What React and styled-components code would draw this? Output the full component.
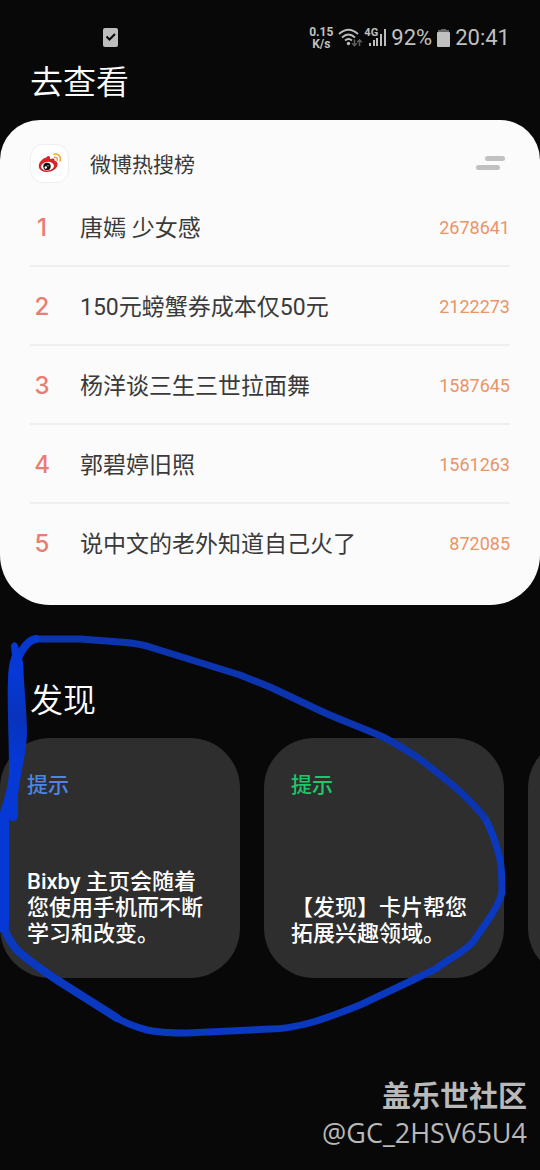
import React from 'react';
import styled, { createGlobalStyle } from 'styled-components';

const topics = [
    { rank: 1, title: '唐嫣 少女感', heat: 2678641 },
    { rank: 2, title: '150元螃蟹券成本仅50元', heat: 2122273 },
    { rank: 3, title: '杨洋谈三生三世拉面舞', heat: 1587645 },
    { rank: 4, title: '郭碧婷旧照', heat: 1561263 },
    { rank: 5, title: '说中文的老外知道自己火了', heat: 872085 },
];

const tips = [
    { id: 'home', color: '#4d85e6', lines: ['Bixby 主页会随着', '您使用手机而不断', '学习和改变。'] },
    { id: 'discover', color: '#1fc76a', lines: ['【发现】卡片帮您', '拓展兴趣领域。'] },
];

function StatusBar() {
    return (
        <Status>
            <svg width="15" height="19" viewBox="0 0 15 19">
                <rect width="15" height="19" rx="2" fill="#bdbdbd" />
                <path d="M3.500 8.500l3 3 5.500-5.500" fill="none" stroke="#080808" strokeWidth="2" />
            </svg>
            <StatusGroup>
                <Speed>
                    <span>0.15</span>
                    <span>K/s</span>
                </Speed>
                <WifiIcon />
                <SignalIcon />
                <StatusText>92%</StatusText>
                <svg width="13" height="18" viewBox="0 0 13 18">
                    <path d="M4 0h5v1h3v2H1V1h3z" fill="#666" />
                    <rect y="3" width="13" height="15" rx="1" fill="#c0c0c0" />
                </svg>
                <StatusText>20:41</StatusText>
            </StatusGroup>
        </Status>
    );
}

function WifiIcon() {
    return (
        <svg width="25" height="20" viewBox="0 0 25 20">
            <g fill="none" stroke="#bdbdbd" strokeWidth="1.800">
                <path d="M1 6Q10.500-2.500 20 6" />
                <path d="M4 9.500Q10.500 3.500 17 9.500" />
                <path d="M7 12.500Q10.500 9.500 14 12.500" />
            </g>
            <circle cx="10.500" cy="15.500" r="1.700" fill="#bdbdbd" />
            <g fill="none" stroke="#5e5e5e" strokeWidth="1.500">
                <path d="M16.500 11.500v6M14.200 15.200l2.300 2.500 2.300-2.500" />
                <path d="M21.500 18v-6M19.200 14.300l2.300-2.500 2.300 2.500" />
            </g>
        </svg>
    );
}

function SignalIcon() {
    return (
        <Signal>
            <svg width="17" height="17" viewBox="0 0 17 17" fill="#bdbdbd">
                <rect x="0" y="14" width="2" height="3" />
                <rect x="4" y="11" width="2" height="6" />
                <rect x="7" y="9" width="2" height="8" />
                <rect x="11" y="5" width="2" height="12" />
                <rect x="15" y="0" width="2" height="17" />
            </svg>
            <Network>4G</Network>
        </Signal>
    );
}

function WeiboLogo() {
    return (
        <Logo>
            <svg width="24" height="20" viewBox="0 0 24 20">
                <path d="M8.500 4.500C10 2 12.500 3 12 6c2.500-1 5-1 4.500 1.500 2 .7 3.500 2 3 4.500-.6 4-5.500 7-10.500 7C4 19 .8 16.500.8 13c0-3.200 2.700-6 5-7.500 1.200-.7 2.200-1 2.700-1z" fill="#d9232b" />
                <ellipse cx="9.500" cy="13.200" rx="6.500" ry="4.300" fill="#fff" transform="rotate(-6 9.500 13)" />
                <circle cx="9" cy="13.400" r="3.700" fill="#111" />
                <circle cx="7.800" cy="14.500" r="1.200" fill="#fff" />
                <circle cx="10" cy="12.700" r=".6" fill="#fff" />
                <g fill="none" stroke="#e5a536" strokeWidth="1.500" strokeLinecap="round">
                    <path d="M16 1.200C20.500.3 23.500 4 22 8" />
                    <path d="M16.500 4.300c2.200-.4 3.300 1.300 2.700 3" />
                </g>
            </svg>
        </Logo>
    );
}

function TopicRow({ rank, title, heat }) {
    return (
        <Row>
            <Rank>{rank}</Rank>
            <Topic>{title}</Topic>
            <Heat>{heat}</Heat>
        </Row>
    );
}

function TipCard({ color, lines }) {
    return (
        <Card>
            <TipLabel $color={color}>提示</TipLabel>
            <TipText>
                {lines.map((line) => <span key={line}>{line}</span>)}
            </TipText>
        </Card>
    );
}

// freehand pen stroke drawn over the discover section
function PenStroke() {
    return (
        <Pen viewBox="0 605 540 450" width="540" height="450" fill="none" strokeLinecap="round" strokeLinejoin="round">
            <defs>
                <linearGradient id="ink" gradientUnits="userSpaceOnUse" x1="0" y1="640" x2="0" y2="940">
                    <stop offset="0" stopColor="#0538d4" />
                    <stop offset=".12" stopColor="#0538d4" />
                    <stop offset=".26" stopColor="#0833bb" />
                    <stop offset=".4" stopColor="#0538d4" />
                    <stop offset="1" stopColor="#0538d4" />
                </linearGradient>
            </defs>
            <path d="M484 817C490 826 494 838 497 848C501 860 502 870 502 893C497 910 485 924 473 942C464 952 450 958 437 968C430 972 421 976 413 980L360 1005C345 1011 330 1017 313 1022C299 1026 285 1029 270 1029L187 1033C172 1033 160 1033 147 1030C136 1027 127 1024 117 1018L57 980C42 970 29 961 17 950C11 943 7 937 4 927" stroke="#0a38bf" strokeWidth="7" />
            <path d="M4 927C7 937 11 943 17 950C29 961 42 970 57 980L117 1018" stroke="#0a38bf" strokeWidth="8" />
            <path d="M36 639C50 639 65 639 80 639L120 642C132 643 143 644 153 648L240 675C250 679 260 683 270 687L323 712C343 721 363 728 383 737C395 743 406 750 417 757C428 765 439 774 450 783C462 793 474 804 484 817" stroke="#0c34ae" strokeWidth="7" />
            <path d="M17 660C22 649 28 640 36 639" stroke="#0637cf" strokeWidth="8" />
            <path d="M11 646C12 641 17 641 18 646L23 662C24 690 27 710 27 735C26 755 20 775 18 795V816Q17 822 12 821L9 820V925L8 932 0 932V812C4 800 9 785 9 770C9 740 7 700 8 680Q8 665 12 655Z" fill="url(#ink)" />
        </Pen>
    );
}

function App() {
    return (
        <Page>
            <GlobalStyle />
            <StatusBar />
            <Heading>去查看</Heading>
            <Panel>
                <PanelHeader>
                    <WeiboLogo />
                    <PanelTitle>微博热搜榜</PanelTitle>
                    <MenuButton aria-label="更多">
                        <svg width="30" height="16" viewBox="0 0 30 16" fill="#c1c1c1">
                            <rect x="9" y="1" width="20" height="5" rx="2.500" />
                            <rect x="0" y="10" width="24" height="5" rx="2.500" />
                        </svg>
                    </MenuButton>
                </PanelHeader>
                <TopicList>
                    {topics.map((topic) => <TopicRow key={topic.rank} {...topic} />)}
                </TopicList>
            </Panel>
            <Discover>
                <Heading>发现</Heading>
                <CardStrip>
                    {tips.map((tip) => <TipCard key={tip.id} {...tip} />)}
                    <Card />
                </CardStrip>
                <PenStroke />
            </Discover>
            <Watermark>
                <Community>盖乐世社区</Community>
                <Author>@GC_2HSV65U4</Author>
            </Watermark>
        </Page>
    );
}

const GlobalStyle = createGlobalStyle`
    * {
        box-sizing: border-box;
    }
    body {
        margin: 0;
        background: #080808;
        font-family: Roboto, "Noto Sans CJK SC", sans-serif;
    }
`;
const Page = styled.div`
    display: flex;
    flex-direction: column;
    min-height: 100vh;
    overflow: hidden;
`;
const Status = styled.header`
    display: flex;
    align-items: center;
    justify-content: space-between;
    height: 60px;
    padding: 15px 30px 0 103px;
`;
const StatusGroup = styled.div`
    display: flex;
    align-items: center;
    gap: 5px;
`;
const StatusText = styled.span`
    font-size: 22px;
    line-height: 26px;
    color: #c0c0c0;
`;
const Speed = styled.div`
    display: flex;
    flex-direction: column;
    align-items: center;
    font-size: 12px;
    font-weight: 700;
    line-height: 12px;
    color: #c0c0c0;
`;
const Signal = styled.div`
    position: relative;
    display: flex;
    padding-left: 1px;
`;
const Network = styled.span`
    position: absolute;
    top: -2px;
    left: -4px;
    font-size: 11px;
    font-weight: 700;
    line-height: 12px;
    color: #c0c0c0;
`;
const Heading = styled.h1`
    margin: 0;
    height: 60px;
    padding-left: 30px;
    font-family: "Noto Sans CJK SC", sans-serif;
    font-size: 33px;
    font-weight: 350;
    line-height: 40px;
    color: #fff;
`;
const Panel = styled.section`
    padding: 0 30px 22px;
    border-radius: 40px 40px 50px 50px;
    background: #fbfbfb;
`;
const PanelHeader = styled.div`
    display: flex;
    align-items: center;
    height: 68px;
    padding-top: 18px;
`;
const Logo = styled.div`
    display: flex;
    align-items: center;
    justify-content: center;
    width: 39px;
    height: 39px;
    border: 1px solid #efefef;
    border-radius: 13px;
    background: #fff;
`;
const PanelTitle = styled.h2`
    flex: 1;
    margin: 0 0 0 21px;
    padding-top: 4px;
    font-size: 21px;
    font-weight: 400;
    line-height: 30px;
    color: #3a3a3a;
`;
const MenuButton = styled.button`
    display: flex;
    padding: 0 4px;
    border: 0;
    background: none;
`;
const TopicList = styled.ol`
    margin: 0;
    padding: 0;
    list-style: none;
`;
const Row = styled.li`
    display: flex;
    align-items: center;
    height: 79px;
    padding-top: 2px;
    border-bottom: 2px solid #efefef;
    &:last-child {
        border-color: transparent;
    }
`;
const Rank = styled.span`
    width: 24px;
    margin-right: 26px;
    font-family: Inter, sans-serif;
    font-size: 24px;
    font-weight: 500;
    text-align: center;
    color: #e87d74;
`;
const Topic = styled.span`
    flex: 1;
    padding-top: 2px;
    font-size: 23px;
    line-height: 32px;
    color: #3a3a3a;
`;
const Heat = styled.span`
    font-size: 18px;
    color: #ea9468;
`;
const Discover = styled.section`
    position: relative;
    padding-top: 73px;
`;
const CardStrip = styled.div`
    display: flex;
    gap: 24px;
`;
const Card = styled.article`
    display: flex;
    flex: none;
    flex-direction: column;
    justify-content: space-between;
    width: 240px;
    height: 240px;
    padding: 32px 27px 31px;
    border-radius: 50px;
    background: #2e2e2e;
`;
const TipLabel = styled.h3`
    margin: 0;
    font-size: 21px;
    font-weight: 500;
    line-height: 30px;
    color: ${(props) => props.$color};
`;
const TipText = styled.p`
    display: flex;
    flex-direction: column;
    margin: 0;
    font-size: 22px;
    font-weight: 500;
    line-height: 26px;
    white-space: nowrap;
    color: #fff;
`;
const Pen = styled.svg`
    position: absolute;
    top: 0;
    left: 0;
    pointer-events: none;
`;
const Watermark = styled.footer`
    display: flex;
    flex-direction: column;
    align-items: flex-end;
    margin-top: auto;
    padding: 0 13px 19px;
    color: #b9b9b9;
`;
const Community = styled.span`
    font-size: 29px;
    font-weight: 700;
    line-height: 36px;
`;
const Author = styled.span`
    font-family: "Open Sans", sans-serif;
    font-size: 27px;
    line-height: 36px;
`;

export default App;
